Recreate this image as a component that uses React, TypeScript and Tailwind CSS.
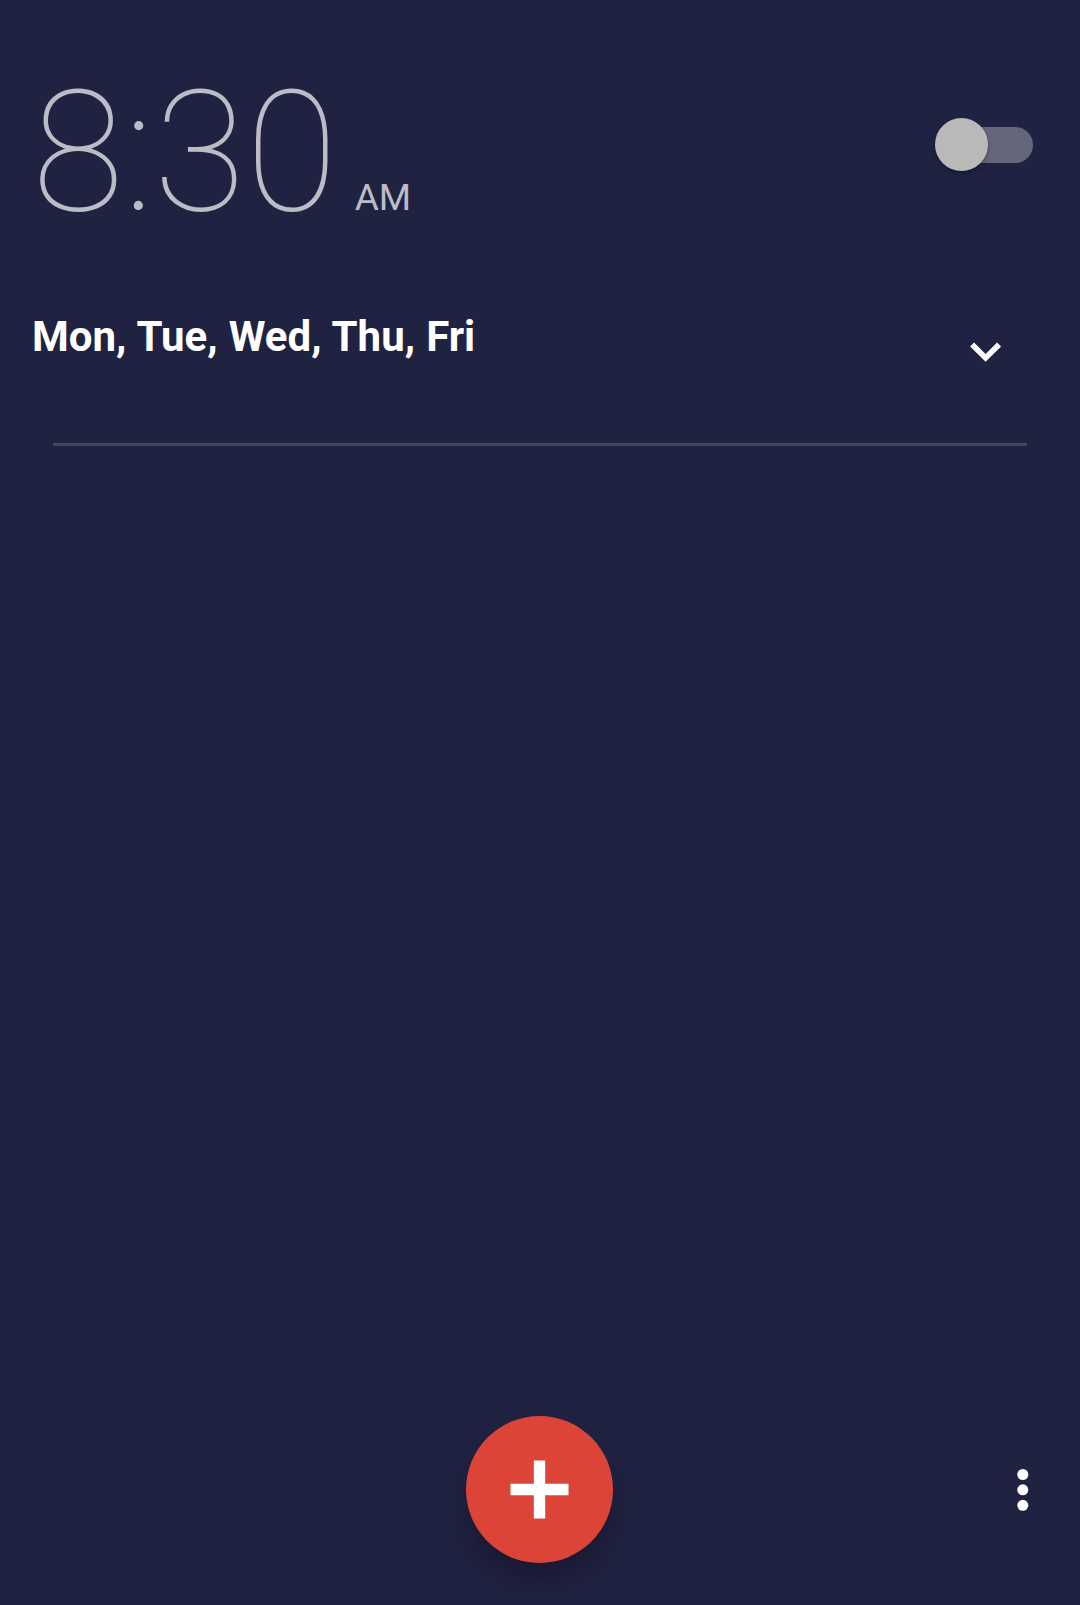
export default function App() {
  return (
    <div className="h-[1605px] w-[1080px] overflow-hidden bg-[#202242] font-['Roboto',sans-serif] flex flex-col">
      <div className="flex justify-between pl-[32px] pr-[47px] pt-[50px] h-[300px]">
        <div className="mt-[3px] flex items-baseline text-[#bcbcc6] h-[200px]">
          <span className="text-[168px] leading-[200px] font-thin">8:30</span>
          <span className="ml-[17px] text-[37px]">AM</span>
        </div>
        <div className="mt-[77px] h-[36px] w-[88px] rounded-full bg-[#64667b]">
          <div className="-ml-[10px] -mt-[9px] size-[53px] rounded-full bg-[#b9b9b9] shadow-[0_2px_4px_rgba(0,0,0,0.3)]" />
        </div>
      </div>
      <div className="flex justify-between pl-[32px] pr-[78px] h-[143px]">
        <span className="text-[42px] leading-[74px] font-bold tracking-[0.03px] [word-spacing:0.6px] text-white">Mon, Tue, Wed, Thu, Fri</span>
        <svg className="mt-[42px] h-[20px] w-[32px]" viewBox="0 0 32 20"><path d="M2.1 2.4L15.6 15.9L29.1 2.4" fill="none" stroke="#fff" strokeWidth="5.6" /></svg>
      </div>
      <div className="mx-[53px] h-[3px] shrink-0 bg-[#444660]" />
      <div className="flex-1" />
      <div className="grid grid-cols-[466px_147px_1fr] items-center mb-[42px]">
        <span />
        <button className="grid place-items-center size-[147px] rounded-full bg-[#db4437] shadow-[0_18px_32px_rgba(0,0,0,0.26)]">
          <svg className="size-[59px]" viewBox="0 0 59 59"><path d="M29.5 0.5V58.5M0.5 29.5H58.5" stroke="#fff" strokeWidth="11.4" /></svg>
        </button>
        <svg className="justify-self-end mr-[51.5px] h-[42px] w-[12px]" viewBox="0 0 12 42" fill="#fff"><circle cx="5.8" cy="5.5" r="5.5" /><circle cx="5.8" cy="20.8" r="5.5" /><circle cx="5.8" cy="36.3" r="5.5" /></svg>
      </div>
    </div>
  );
}
